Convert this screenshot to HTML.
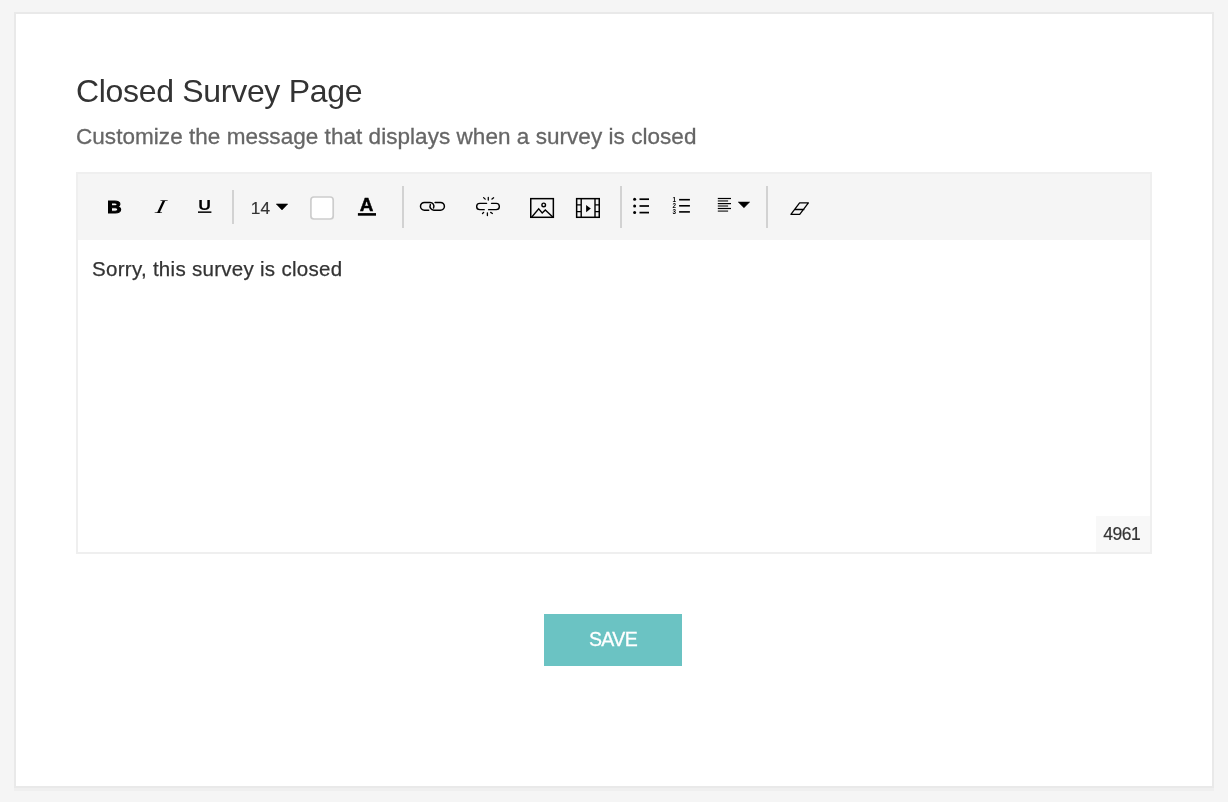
<!DOCTYPE html>
<html lang="en">
<head>
<meta charset="utf-8">
<title>Closed Survey Page</title>
<style>
html,body{margin:0;padding:0;}
body{width:1228px;height:802px;overflow:hidden;background:#f5f5f5;font-family:"Liberation Sans",Arial,Helvetica,sans-serif;color:#333;position:relative;}
.card{position:absolute;left:14px;top:12px;width:1196px;height:772px;background:#fff;border:2px solid #e9e9e9;box-shadow:0 3px 0 0 #efefef;}
h1{position:absolute;left:76px;top:71px;margin:0;font-weight:400;font-size:32px;line-height:40px;color:#333;white-space:nowrap;letter-spacing:-0.31px;}
.sub{position:absolute;left:75.8px;top:121px;margin:0;font-size:22.5px;line-height:32px;color:#666;white-space:nowrap;letter-spacing:0.045px;-webkit-text-stroke:0.3px #666;}
.editor{position:absolute;left:76px;top:172px;width:1072px;height:378px;border:2px solid #efefef;background:#fff;}
.toolbar{position:absolute;left:0;top:0;width:1072px;height:66px;background:#f5f5f5;}
.content{position:absolute;left:14.3px;top:81px;font-size:20.5px;line-height:28px;color:#333;white-space:nowrap;letter-spacing:0.29px;-webkit-text-stroke:0.25px #333;}
.counter{position:absolute;right:0;bottom:0;width:54px;height:36px;background:#f8f8f8;font-size:17.5px;line-height:36px;text-align:left;padding-left:7.2px;box-sizing:border-box;color:#333;letter-spacing:-0.5px;-webkit-text-stroke:0.2px #333;}
.save{position:absolute;left:544px;top:614px;width:138px;height:52px;background:#6bc3c3;color:#fff;font-size:19.5px;line-height:50px;text-align:center;border:0;padding:0 0 2px 0;box-sizing:border-box;font-family:inherit;letter-spacing:-0.6px;-webkit-text-stroke:0.3px #fff;}
.icons{position:absolute;left:78px;top:174px;width:1072px;height:66px;}
h1,.sub,.content,.counter,.save,.icons{will-change:transform;}
.icons text{font-family:"Liberation Sans",Arial,sans-serif;}
</style>
</head>
<body>
<div class="card"></div>
<h1>Closed Survey Page</h1>
<p class="sub">Customize the message that displays when a survey is closed</p>
<div class="editor">
  <div class="toolbar"></div>
  <div class="content">Sorry, this survey is closed</div>
  <div class="counter">4961</div>
</div>
<svg class="icons" viewBox="78 174 1072 66">
  <!-- separators -->
  <g fill="#d2d2d2">
    <rect x="232" y="190" width="2" height="34"/>
    <rect x="402" y="186" width="2" height="42"/>
    <rect x="620" y="186" width="2" height="42"/>
    <rect x="766" y="186" width="2" height="42"/>
  </g>
  <!-- bold / italic / underline -->
  <text x="0" y="0" transform="translate(107.2 212.75) scale(1.14 1)" text-rendering="geometricPrecision" font-size="17.4" font-weight="700" fill="#000" stroke="#000" stroke-width="1">B</text>
  <text x="0" y="0" transform="translate(153.6 212.9) skewX(-25) scale(1.45 1)" font-size="19.5" fill="#000" style="font-family:'Liberation Serif',serif">I</text>
  <text x="0" y="0" transform="translate(198.3 209.8) scale(1.17 1)" font-size="15" font-weight="700" fill="#000">U</text>
  <rect x="198" y="211.4" width="13.4" height="1.5" fill="#000"/>
  <!-- font size -->
  <text x="250.8" y="213.7" font-size="17.3" fill="#333" stroke="#333" stroke-width="0.2" letter-spacing="0.2">14</text>
  <path d="M276.3 204h11.4l-5.7 5.9z" fill="#000" stroke="#000" stroke-width="0.6" stroke-linejoin="round"/>
  <!-- colour box -->
  <rect x="310.9" y="197" width="22.3" height="22" rx="3" ry="3" fill="#fff" stroke="#cdcdcd" stroke-width="1.7"/>
  <!-- text colour A -->
  <text x="0" y="0" transform="translate(359.8 210.8) scale(1.05 1)" font-size="18" font-weight="700" fill="#000" stroke="#000" stroke-width="0.45">A</text>
  <rect x="357.9" y="213.1" width="18.1" height="2.6" fill="#000"/>

  <!-- link -->
  <g fill="none" stroke="#000" stroke-width="1.5" stroke-linecap="round">
    <path d="M428.7 210.2H424.4A3.9 3.9 0 0 1 424.4 202.4H430A3.9 3.9 0 0 1 433.53 207.95"/>
    <path d="M435.1 202.4H440.5A3.9 3.9 0 0 1 440.5 210.2H433.9A3.9 3.9 0 0 1 430.37 204.65"/>
  </g>
  <!-- unlink -->
  <g fill="none" stroke="#000" stroke-width="1.4" stroke-linecap="round">
    <path d="M486.6 203.35H479.8A3.15 3.15 0 0 0 479.8 209.65H484.2"/>
    <path d="M491.5 203.35H496.2A3.15 3.15 0 0 1 496.2 209.65H488.6"/>
    <path d="M488.3 197.4V200M483.6 197.6L485.2 199.1M493.6 197.8L492 199.1" stroke-width="1.3"/>
    <path d="M487.4 212.8V215.6M482.5 213.5L483.6 212.5M492.4 213.5L490.7 212.4" stroke-width="1.3"/>
  </g>
  <!-- image -->
  <g fill="none" stroke="#000" stroke-width="1.5">
    <rect x="530.75" y="198.65" width="22.6" height="18.65"/>
    <circle cx="543.7" cy="204.9" r="1.8" stroke-width="1.4"/>
    <path d="M531.6 217.2L538.7 208.9L542.2 212.9L545.3 209.9L553 217.2" stroke-width="1.4"/>
  </g>
  <!-- video -->
  <g fill="none" stroke="#000" stroke-width="1.5">
    <rect x="576.65" y="198.65" width="22.6" height="18.65"/>
    <path d="M581.2 198.65V217.3M595 198.65V217.3M576.65 204.9H581.2M576.65 211.6H581.2M595 204.9H599.25M595 211.6H599.25" stroke-width="1.4"/>
    <path d="M586.1 204.9L590.8 208.55L586.1 212.2z" fill="#000" stroke="none"/>
  </g>
  <!-- unordered list -->
  <g fill="#000">
    <circle cx="634.65" cy="199.2" r="1.5"/><circle cx="634.65" cy="206" r="1.5"/><circle cx="634.65" cy="212.6" r="1.5"/>
    <rect x="639.5" y="198.35" width="9.5" height="1.7"/><rect x="639.5" y="205.15" width="9.5" height="1.7"/><rect x="639.5" y="211.75" width="9.5" height="1.7"/>
  </g>
  <!-- ordered list -->
  <g fill="#000">
    <text x="672.5" y="201.8" font-size="6.3" font-weight="700">1</text>
    <text x="672.5" y="208.1" font-size="6.3" font-weight="700">2</text>
    <text x="672.5" y="214.3" font-size="6.3" font-weight="700">3</text>
    <rect x="679.1" y="198.9" width="10.8" height="1.6"/><rect x="679.1" y="205" width="10.8" height="1.6"/><rect x="679.1" y="211.1" width="10.8" height="1.6"/>
  </g>
  <!-- align -->
  <g>
    <rect x="717.8" y="197.9" width="13.2" height="1.2" fill="#000"/>
    <rect x="717.8" y="203" width="13.2" height="1.2" fill="#000"/>
    <rect x="717.8" y="207.9" width="13.2" height="1.2" fill="#000"/>
    <rect x="717.8" y="200.29999999999998" width="10.3" height="1.3" fill="#303030"/>
    <rect x="717.8" y="205.35" width="10.3" height="1.3" fill="#303030"/>
    <rect x="717.8" y="210.45" width="10.3" height="1.3" fill="#303030"/>
  </g>
  <path d="M738.3 202.1h11.3l-5.65 5.6z" fill="#000" stroke="#000" stroke-width="0.6" stroke-linejoin="round"/>
  <!-- eraser -->
  <path d="M799.6 202.9H808.4L799.7 214.3H790.9zM794.8 209.5H804" fill="none" stroke="#000" stroke-width="1.3" stroke-linejoin="round" stroke-linecap="round"/>
</svg>
<button class="save">SAVE</button>
</body>
</html>
